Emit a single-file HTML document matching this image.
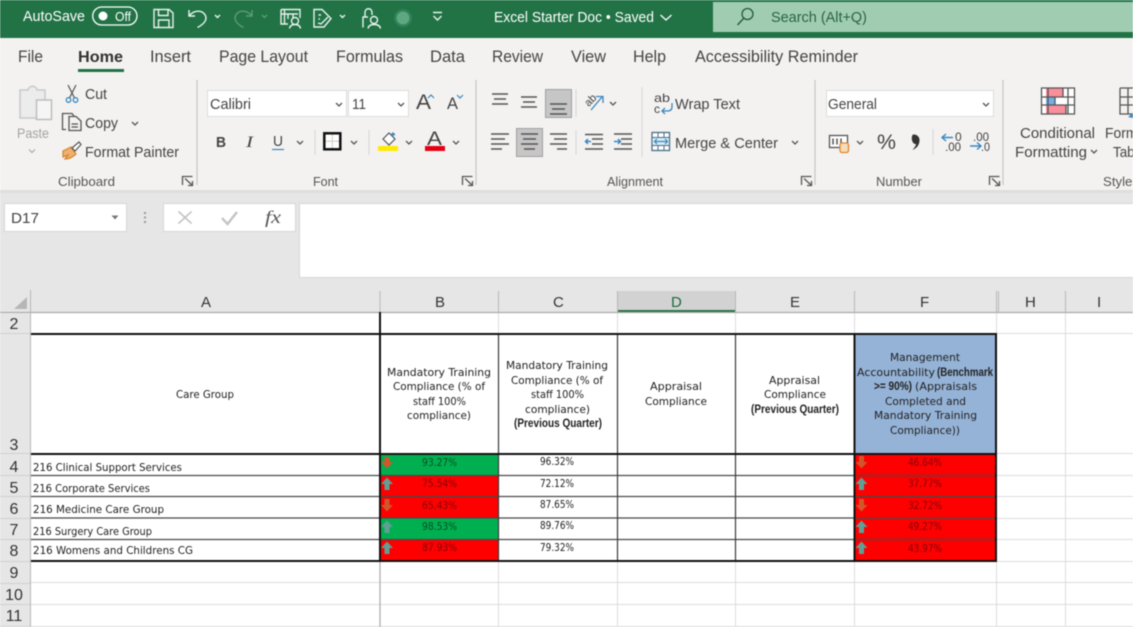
<!DOCTYPE html>
<html><head><meta charset="utf-8"><title>Excel Starter Doc</title>
<style>
html,body{margin:0;padding:0;width:1133px;height:627px;overflow:hidden;background:#fff}
svg{display:block;filter:blur(.4px)}
text{font-family:"Liberation Sans",sans-serif;fill:#444;font-size:15px}
.w{fill:#fff}
.t{font-size:17px;fill:#444}
.r{font-size:14.5px;fill:#444}
.l{font-size:12.5px;fill:#555}
.c{font-family:"DejaVu Sans",sans-serif;font-size:11px;fill:#222}
.b{font-family:"Liberation Sans",sans-serif;font-weight:bold;font-size:12px;fill:#222}
.h{font-size:15px;fill:#333}
.n{font-size:16px;fill:#333;text-anchor:middle}
.gv{font-family:"DejaVu Sans",sans-serif;font-size:11px;fill:#064d24}
.rv{font-family:"DejaVu Sans",sans-serif;font-size:11px;fill:#7d0508}
.i{fill:none;stroke:#555;stroke-width:1.3}
.s{fill:none;stroke:#e8f2ec;stroke-width:1.4}
.ch{fill:none;stroke:#555;stroke-width:1.3}
</style></head><body>
<svg width="1133" height="627" viewBox="0 0 1133 627" xmlns="http://www.w3.org/2000/svg">
<rect width="1133" height="627" fill="#fff"/>
<!-- title bar -->
<rect width="1133" height="38" fill="#217346"/>
<rect x="713" y="2" width="420" height="30" fill="#a0cdb2"/>
<text class="w" x="23" y="21" font-size="14" textLength="62" lengthAdjust="spacingAndGlyphs">AutoSave</text>
<rect x="92.700" y="7" width="44.300" height="18" rx="9" fill="none" stroke="#fff" stroke-width="1.3"/>
<circle cx="103" cy="16" r="4.500" fill="#fff"/>
<text class="w" x="115" y="21" style="font-size:13px" textLength="16" lengthAdjust="spacingAndGlyphs">Off</text>
<path class="s" d="M154 9.500H169L173 13V27.500H154ZM158.500 9.500V15.500H168V9.500M158.500 27.500V20H169V27.500"/>
<path class="s" d="M189 10V16H195M189.500 15.500C193 11 200 9.500 204 13.500C208 18 206 23 197.500 27.500"/>
<path class="s" d="M215 15l2.500 2.500 2.500-2.500"/>
<path d="M252 10V16H246M251.500 15.500C248 11 241 9.500 237 13.500C233 18 235 23 243.500 27.500" fill="none" stroke="#5d9a78" stroke-width="1.4"/>
<path d="M262 15l2.500 2.500 2.500-2.500" fill="none" stroke="#5d9a78" stroke-width="1.3"/>
<path class="s" d="M281 9.500H300V18M281 9.500V24H288M284.500 9.500V24M281 14H298M288 14V19M293 14.500V18"/>
<circle cx="295" cy="21" r="3.500" fill="none" stroke="#e8f2ec" stroke-width="1.400"/>
<path class="s" d="M289.500 28.500C290 25.500 292 24.500 295 24.500C298 24.500 300 25.500 300.500 28.500"/>
<path class="s" d="M314 9.500H322L331 18.500L324 27H314ZM318.500 15H321M318.500 19H320M318 23L321 24L328 17"/>
<path class="s" d="M340 15l2.500 2.500 2.500-2.500"/>
<path class="s" d="M363 27.500V17H368M365 17V12.500C365 7.500 372 7.500 372 12.500V15"/>
<circle cx="374" cy="20" r="3.500" fill="none" stroke="#e8f2ec" stroke-width="1.400"/>
<path class="s" d="M368 28.500C368.500 25.500 371 24.500 374 24.500C377 24.500 380 25.500 380.500 28.500"/>
<circle cx="403" cy="18" r="9" fill="#2f8358"/><circle cx="403" cy="18" r="6.500" fill="#5ea781"/>
<path class="s" d="M433 12.500H442M433.500 16l4 4 4-4"/>
<text class="w" x="494" y="22" textLength="160" lengthAdjust="spacingAndGlyphs" style="font-size:15px">Excel Starter Doc • Saved</text>
<path d="M660.500 15l5.500 5 5.500-5" fill="none" stroke="#fff" stroke-width="1.300"/>
<circle cx="747.500" cy="14" r="5.500" fill="none" stroke="#205c3c" stroke-width="1.300"/><path d="M743.500 18.500L737.500 25" stroke="#205c3c" stroke-width="1.400"/>
<text x="771" y="22" textLength="96" lengthAdjust="spacingAndGlyphs" style="font-size:15px;fill:#2a6345">Search (Alt+Q)</text>
<!-- ribbon -->
<rect y="38" width="1133" height="152" fill="#f3f2f1"/>
<text class="t" x="18" y="62" textLength="25" lengthAdjust="spacingAndGlyphs">File</text>
<text class="t" x="78" y="62" textLength="45" lengthAdjust="spacingAndGlyphs" style="font-weight:bold;fill:#333;font-size:16px">Home</text>
<rect x="78" y="69" width="46" height="3" fill="#217346"/>
<text class="t" x="150" y="62" textLength="41" lengthAdjust="spacingAndGlyphs">Insert</text>
<text class="t" x="219" y="62" textLength="89" lengthAdjust="spacingAndGlyphs">Page Layout</text>
<text class="t" x="336" y="62" textLength="67" lengthAdjust="spacingAndGlyphs">Formulas</text>
<text class="t" x="430" y="62" textLength="35" lengthAdjust="spacingAndGlyphs">Data</text>
<text class="t" x="492" y="62" textLength="51" lengthAdjust="spacingAndGlyphs">Review</text>
<text class="t" x="571" y="62" textLength="35" lengthAdjust="spacingAndGlyphs">View</text>
<text class="t" x="633" y="62" textLength="33" lengthAdjust="spacingAndGlyphs">Help</text>
<text class="t" x="695" y="62" textLength="163" lengthAdjust="spacingAndGlyphs">Accessibility Reminder</text>
<!-- separators -->
<g stroke="#c8c6c4" stroke-width="1.200"><path d="M197 80V185M476 80V185M815 80V185M1003 80V185"/>
<path d="M315 130V155M369 130V155M576 89V117M576 130V155M642 87V157M933 129V155" stroke="#dcdad8"/></g>
<!-- clipboard -->
<path d="M20 118V90H28C29 85 36 85 37 90H45V118Z" fill="#ececec" stroke="#c8c8c8" stroke-width="1.500"/>
<rect x="36.500" y="100" width="15" height="19.500" fill="#f5f5f5" stroke="#bdbdbd" stroke-width="1.500"/>
<text x="17" y="138" textLength="32" lengthAdjust="spacingAndGlyphs" style="fill:#a3a3a3;font-size:14px">Paste</text>
<path d="M29 149.500l3 3 3-3" fill="none" stroke="#aaa" stroke-width="1.200"/>
<path d="M68 85L74.500 98M76 85L69.500 98" fill="none" stroke="#555" stroke-width="1.200"/>
<circle cx="68.500" cy="100" r="2.300" fill="none" stroke="#3a87c0" stroke-width="1.300"/><circle cx="75.500" cy="100" r="2.300" fill="none" stroke="#3a87c0" stroke-width="1.300"/>
<text class="r" x="85" y="99" textLength="22" lengthAdjust="spacingAndGlyphs">Cut</text>
<path class="i" d="M66 129.500H62.500V113.500H72L74 116M69 116.500H76L81 121V130.500H69ZM71.500 124H78M71.500 127H78"/>
<text class="r" x="85" y="128" textLength="33" lengthAdjust="spacingAndGlyphs">Copy</text>
<path class="ch" d="M132 122l3 3 3-3"/>
<path d="M63 151L71 147L76 154C72 158 68 159 65 159L68 155L63 157Z" fill="#eeb16f" stroke="#d4822b" stroke-width="1.200"/>
<path d="M72 148L79 142L81 144.500L75 151Z" fill="#fff" stroke="#555" stroke-width="1.200"/>
<text class="r" x="85" y="157" textLength="94" lengthAdjust="spacingAndGlyphs">Format Painter</text>
<text class="l" x="58" y="186" textLength="57" lengthAdjust="spacingAndGlyphs">Clipboard</text>
<path class="i" d="M182.500 185V176.500H192.500M185 178.500L192 185M192.500 181V185.500H188" stroke-width="1"/>
<!-- font -->
<rect x="207.500" y="90.500" width="139" height="26" fill="#fff" stroke="#dcdcdc"/>
<rect x="348.500" y="90.500" width="60" height="26" fill="#fff" stroke="#dcdcdc"/>
<text class="r" x="210" y="109" textLength="41" lengthAdjust="spacingAndGlyphs">Calibri</text>
<path class="ch" d="M336 103l3 3 3-3M398 103l3 3 3-3" stroke="#444"/>
<text class="r" x="352" y="109" textLength="14" lengthAdjust="spacingAndGlyphs">11</text>
<text x="416" y="109" textLength="15" lengthAdjust="spacingAndGlyphs" style="font-size:21px">A</text>
<path d="M428 98l3-3 3 3" fill="none" stroke="#3a87c0" stroke-width="1.200"/>
<text x="447" y="109" textLength="11" lengthAdjust="spacingAndGlyphs" style="font-size:17px">A</text>
<path d="M457 95l3 3 3-3" fill="none" stroke="#3a87c0" stroke-width="1.200"/>
<text x="216" y="147" textLength="10" lengthAdjust="spacingAndGlyphs" style="font-weight:bold;font-size:15px">B</text>
<text x="246" y="147" textLength="7" lengthAdjust="spacingAndGlyphs" style="font-style:italic;font-family:'Liberation Serif',serif;font-size:16px">I</text>
<text x="273" y="146" textLength="10" lengthAdjust="spacingAndGlyphs" style="font-size:15px">U</text>
<path d="M272 149.500H284" stroke="#3a87c0" stroke-width="1.200"/>
<path class="ch" d="M297 141l3 3 3-3M351 141l3 3 3-3M406 141l3 3 3-3M453 141l3 3 3-3"/>
<rect x="324.300" y="133.300" width="16" height="16" fill="#fff" stroke="#111" stroke-width="2.500"/>
<path d="M332.300 135V148M326 141.300H339" stroke="#999" stroke-dasharray="1 1"/>
<path d="M383 139L389 133L395 139L389 145Z" fill="#fff" stroke="#555" stroke-width="1.200"/>
<path d="M393 137V133M391 135l2-2 2 2" fill="none" stroke="#3a87c0" stroke-width="1.300"/>
<rect x="378" y="146" width="20" height="5" fill="#ffea00"/>
<text x="427" y="145" textLength="15" lengthAdjust="spacingAndGlyphs" style="font-size:19px">A</text>
<rect x="425" y="146" width="20" height="5" fill="#e60012"/>
<text class="l" x="313" y="186" textLength="25" lengthAdjust="spacingAndGlyphs">Font</text>
<path class="i" d="M462.500 185V176.500H472.500M465 178.500L472 185M472.500 181V185.500H468" stroke-width="1"/>
<!-- alignment -->
<rect x="545.500" y="89.500" width="26" height="28" fill="#c6c6c6" stroke="#a0a0a0"/>
<rect x="516.500" y="128.500" width="26" height="28" fill="#c6c6c6" stroke="#a0a0a0"/>
<g stroke="#555" stroke-width="1.400" fill="none">
<path d="M492 94H508M494 99H506M492 104H508"/>
<path d="M521 97H537M523 102H535M521 107H537"/>
<path d="M550 104H567M552 109H565M550 114H567"/>
<path d="M491 134H509M491 139H505M491 144H509M491 149H502"/>
<path d="M521 134H538M523 139H536M521 144H538M524 149H535"/>
<path d="M550 134H567M554 139H567M550 144H567M557 149H567"/>
<path d="M592 139H603M592 144H603M585 134.500H603M585 149H603"/>
<path d="M621 139H632M621 144H632M614 134H632M614 149H632"/>
</g>
<path d="M585.500 141.500H591M588 139l-2.500 2.500 2.500 2.500" fill="none" stroke="#3a87c0" stroke-width="1.500"/>
<path d="M614 141.500H620M618 139l2.500 2.500-2.500 2.500" fill="none" stroke="#3a87c0" stroke-width="1.500"/>
<path d="M591 110L602 97M596 96.500H603V103" fill="none" stroke="#3a87c0" stroke-width="1.300"/>
<text x="584" y="104" transform="rotate(-45 590 100)" style="font-size:11px">ab</text>
<path class="ch" d="M610 102l3 3 3-3"/>
<text x="654" y="102" textLength="16" lengthAdjust="spacingAndGlyphs" style="font-size:12px">ab</text>
<text x="654" y="113" style="font-size:12px">c</text>
<path d="M672 103V107C672 110 670 111 667 111H662M665 108l-3 3 3 3" fill="none" stroke="#3a87c0" stroke-width="1.300"/>
<text class="r" x="675" y="109" textLength="65" lengthAdjust="spacingAndGlyphs">Wrap Text</text>
<rect x="652" y="132.500" width="17.500" height="18" fill="#fff" stroke="#4a6e85" stroke-width="1.300"/>
<rect x="652.700" y="138" width="16" height="7" fill="#d8ecf7"/>
<path d="M654.500 141.500H667.500M657 139l-2.500 2.500 2.500 2.500M665 139l2.500 2.500-2.500 2.500" fill="none" stroke="#3a87c0" stroke-width="1.200"/>
<path d="M652 137.500H670M652 145.500H670M658 132V137M664 132V137M658 146V151M664 146V151" stroke="#4a6e85"/>
<text class="r" x="675" y="148" textLength="103" lengthAdjust="spacingAndGlyphs">Merge &amp; Center</text>
<path class="ch" d="M792 141l3 3 3-3"/>
<text class="l" x="607" y="186" textLength="56" lengthAdjust="spacingAndGlyphs">Alignment</text>
<path class="i" d="M801.500 185V176.500H811.500M804 178.500L811 185M811.500 181V185.500H807" stroke-width="1"/>
<!-- number -->
<rect x="826.500" y="90.500" width="167" height="26" fill="#fff" stroke="#dcdcdc"/>
<text class="r" x="828" y="109" textLength="49" lengthAdjust="spacingAndGlyphs">General</text>
<path class="ch" d="M983 103l3 3 3-3" stroke="#444"/>
<rect x="829.500" y="135.500" width="18" height="12" fill="#fff" stroke="#555" stroke-width="1.300"/>
<path d="M833 138.500V144.500M837 138.500V144.500M841 138.500V144.500" stroke="#555" stroke-width="1.500"/>
<rect x="840" y="143" width="8.500" height="9.500" rx="2" fill="#f7dcb8" stroke="#e0862c" stroke-width="1.300"/>
<path class="ch" d="M857 141l3 3 3-3"/>
<text x="877" y="149" textLength="19" lengthAdjust="spacingAndGlyphs" style="font-size:21px">%</text>
<path d="M913 134.500C917 134 920 137 919.500 141C919 146 916 148.500 912.500 150C914.500 147.500 916 145.500 916 144C912 144.500 910.500 137 913 134.500Z" fill="#333"/>
<path d="M942 137.500H953M946 134l-4 3.500 4 3.500" fill="none" stroke="#3a87c0" stroke-width="1.400"/>
<text x="955" y="141" style="font-size:12px">0</text><text x="945" y="151" style="font-size:12px" textLength="16" lengthAdjust="spacingAndGlyphs">.00</text>
<text x="973" y="141" style="font-size:12px" textLength="16" lengthAdjust="spacingAndGlyphs">.00</text>
<path d="M970 146H981M977 142.500l4 3.500-4 3.500" fill="none" stroke="#3a87c0" stroke-width="1.400"/>
<text x="981" y="151" style="font-size:12px" textLength="9" lengthAdjust="spacingAndGlyphs">.0</text>
<text class="l" x="876" y="186" textLength="46" lengthAdjust="spacingAndGlyphs">Number</text>
<path class="i" d="M989.500 185V176.500H999.500M992 178.500L999 185M999.500 181V185.500H995" stroke-width="1"/>
<!-- styles -->
<rect x="1041.500" y="88" width="33" height="26" fill="#fff"/>
<rect x="1046" y="88" width="17" height="9" fill="#f88f9b"/>
<rect x="1046" y="97" width="9" height="8" fill="#73b0e5"/>
<rect x="1046" y="105" width="20" height="9" fill="#f88f9b"/>
<path d="M1041.500 88H1074.500V114H1041.500ZM1041.500 97H1074.500M1041.500 105H1074.500M1048 88V114M1055 97V105M1063 88V97M1066 105V114M1068 88V114" fill="none" stroke="#555" stroke-width="1.300"/>
<text class="r" x="1020" y="138" textLength="75" lengthAdjust="spacingAndGlyphs">Conditional</text>
<text class="r" x="1015" y="157" textLength="72" lengthAdjust="spacingAndGlyphs">Formatting</text>
<path class="ch" d="M1091 150l3 3 3-3"/>
<path d="M1120 88H1133M1120 88V114H1133M1120 97H1133M1120 105H1133M1128 88V114" fill="none" stroke="#555" stroke-width="1.300"/>
<path d="M1128 117L1133 113V118Z" fill="#3a87c0"/>
<text class="r" x="1105" y="138" textLength="44" lengthAdjust="spacingAndGlyphs">Format</text>
<text class="r" x="1113" y="157" textLength="32" lengthAdjust="spacingAndGlyphs">Table</text>
<text class="l" x="1103" y="186" textLength="36" lengthAdjust="spacingAndGlyphs">Styles</text>
<!-- formula bar -->
<rect y="190" width="1133" height="122" fill="#e6e6e6"/>
<rect y="190" width="1133" height="3" fill="#dedede"/>
<rect x="4.500" y="203.500" width="122" height="28" fill="#fff" stroke="#d6d6d6"/>
<text x="11" y="223" textLength="28" lengthAdjust="spacingAndGlyphs" style="font-size:15px">D17</text>
<path d="M111.500 215.500H118.500L115 219.500Z" fill="#777"/>
<path d="M145 212V214M145 216.500V218.500M145 221V223" stroke="#999" stroke-width="2"/>
<rect x="163.500" y="203.500" width="132" height="28" fill="#fff" stroke="#d6d6d6"/>
<path d="M178.500 211.500L191.500 223.500M191.500 211.500L178.500 223.500" stroke="#c4c4c4" stroke-width="1.600"/>
<path d="M222 218L227.500 224L237 212" fill="none" stroke="#c4c4c4" stroke-width="2.400"/>
<text x="265" y="223" textLength="16" lengthAdjust="spacingAndGlyphs" style="font-family:'Liberation Serif',serif;font-style:italic;font-size:18px;fill:#555">fx</text>
<rect x="299.500" y="203.500" width="834" height="74" fill="#fff" stroke="#d6d6d6"/>
<!-- column headers -->
<rect x="617" y="291" width="118" height="21" fill="#d2d2d2"/>
<rect x="617" y="310" width="118" height="2" fill="#217346"/>
<path d="M27 297V309H14Z" fill="#b6b6b6"/>
<path d="M0 312.500H1133" stroke="#ababab" stroke-width="1.300"/>
<g stroke="#b8b8b8"><path d="M30.500 290V627M380 291V312M498.500 291V312M617.500 291V312M735.500 291V312M854.500 291V312M996.500 291V312M998.500 291V312M1065.500 291V312"/></g>
<text class="h" x="201" y="307">A</text><text class="h" x="435" y="307">B</text><text class="h" x="553" y="307">C</text>
<text class="h" x="671" y="307" style="fill:#1d6b41">D</text><text class="h" x="790" y="307">E</text><text class="h" x="920" y="307">F</text>
<text class="h" x="1025" y="307">H</text><text class="h" x="1097" y="307">I</text>
<!-- row headers -->
<rect y="313" width="30" height="314" fill="#e6e6e6"/>
<g stroke="#cfcfcf"><path d="M0 333.500H30M0 453.500H30M0 475.500H30M0 496.500H30M0 518.500H30M0 539.500H30M0 561.500H30M0 583.500H30M0 604.500H30M0 626.500H30"/></g>
<text class="n" x="14" y="329">2</text><text class="n" x="14" y="450">3</text><text class="n" x="14" y="472">4</text><text class="n" x="14" y="493">5</text><text class="n" x="14" y="514">6</text><text class="n" x="14" y="535">7</text><text class="n" x="14" y="556">8</text><text class="n" x="14" y="578">9</text><text class="n" x="14" y="600">10</text><text class="n" x="14" y="621">11</text>
<!-- fills -->
<rect x="381" y="454" width="117" height="21" fill="#00b050"/>
<rect x="381" y="475" width="117" height="43" fill="#fe0000"/>
<rect x="381" y="518" width="117" height="21" fill="#00b050"/>
<rect x="381" y="539" width="117" height="22" fill="#fe0000"/>
<rect x="855" y="334" width="141" height="119" fill="#95b3d7"/>
<rect x="855" y="454" width="141" height="107" fill="#fe0000"/>
<!-- gridlines -->
<g stroke="#dcdcdc"><path d="M31 333.500H1133M31 582.500H1133M31 604.500H1133M31 626.500H1133M997 453.500H1133M997 475.500H1133M997 496.500H1133M997 518.500H1133M997 539.500H1133M997 561.500H1133"/>
<path d="M498.500 313V333M617.500 313V333M735.500 313V333M854.500 313V333M996.500 313V333M1065.500 313V627M498.500 562V627M617.500 562V627M735.500 562V627M854.500 562V627M996.500 562V627"/></g>
<path d="M380 562V627" stroke="#a8a8a8" stroke-width="1.200"/>
<!-- table borders -->
<g stroke="#4a4a4a" stroke-width="1.200"><path d="M31 475.500H996M31 496.500H996M31 518H996M31 539.500H996"/></g>
<g stroke="#3a3a3a" stroke-width="1.200"><path d="M498.500 334V561M617.500 334V561M735.500 334V561"/></g>
<g stroke="#111" stroke-width="2"><path d="M31 334H997M31 454H997M31 561H997M380 312V562"/>
<path d="M854.500 334V561M996 333V562"/></g>
<!-- arrows -->
<g fill="#d2562c"><path d="M384.500 457H389.500V462H393L387 468.500L381 462H384.500Z"/><path d="M384.500 499H389.500V505H393L387 511.500L381 505H384.500Z"/><path d="M859 456H864V462H867.500L861.500 468.500L855.500 462H859Z"/><path d="M859 499H864V505H867.500L861.500 511.500L855.500 505H859Z"/></g>
<g fill="#5f9f95"><path d="M384.500 490H389.500V484H393L387 477.500L381 484H384.500Z"/><path d="M384.500 533H389.500V527H393L387 520.500L381 527H384.500Z"/><path d="M384.500 554H389.500V548H393L387 541.500L381 548H384.500Z"/><path d="M859 490H864V484H867.500L861.500 477.500L855.500 484H859Z"/><path d="M859 533H864V527H867.500L861.500 520.500L855.500 527H859Z"/><path d="M859 554H864V548H867.500L861.500 541.500L855.500 548H859Z"/></g>
<!-- cells text -->
<text class="c" x="176" y="398" textLength="58" lengthAdjust="spacingAndGlyphs">Care Group</text>
<text class="c" x="33" y="471" textLength="149" lengthAdjust="spacingAndGlyphs">216 Clinical Support Services</text>
<text class="c" x="33" y="492" textLength="117" lengthAdjust="spacingAndGlyphs">216 Corporate Services</text>
<text class="c" x="33" y="513" textLength="131" lengthAdjust="spacingAndGlyphs">216 Medicine Care Group</text>
<text class="c" x="33" y="535" textLength="119" lengthAdjust="spacingAndGlyphs">216 Surgery Care Group</text>
<text class="c" x="33" y="554" textLength="160" lengthAdjust="spacingAndGlyphs">216 Womens and Childrens CG</text>
<text class="c" x="387" y="376" textLength="104" lengthAdjust="spacingAndGlyphs">Mandatory Training</text>
<text class="c" x="393" y="390" textLength="92" lengthAdjust="spacingAndGlyphs">Compliance (% of</text>
<text class="c" x="413" y="405" textLength="53" lengthAdjust="spacingAndGlyphs">staff 100%</text>
<text class="c" x="407" y="419" textLength="64" lengthAdjust="spacingAndGlyphs">compliance)</text>
<text class="c" x="506" y="369" textLength="102" lengthAdjust="spacingAndGlyphs">Mandatory Training</text>
<text class="c" x="511" y="384" textLength="92" lengthAdjust="spacingAndGlyphs">Compliance (% of</text>
<text class="c" x="531" y="398" textLength="53" lengthAdjust="spacingAndGlyphs">staff 100%</text>
<text class="c" x="525" y="413" textLength="65" lengthAdjust="spacingAndGlyphs">compliance)</text>
<text class="b" x="514" y="427" textLength="88" lengthAdjust="spacingAndGlyphs">(Previous Quarter)</text>
<text class="c" x="650" y="390" textLength="52" lengthAdjust="spacingAndGlyphs">Appraisal</text>
<text class="c" x="645" y="405" textLength="62" lengthAdjust="spacingAndGlyphs">Compliance</text>
<text class="c" x="769" y="384" textLength="51" lengthAdjust="spacingAndGlyphs">Appraisal</text>
<text class="c" x="764" y="398" textLength="62" lengthAdjust="spacingAndGlyphs">Compliance</text>
<text class="b" x="751" y="413" textLength="88" lengthAdjust="spacingAndGlyphs">(Previous Quarter)</text>
<text class="c" x="890" y="361" textLength="70" lengthAdjust="spacingAndGlyphs">Management</text>
<text class="c" x="857" y="376" textLength="78" lengthAdjust="spacingAndGlyphs">Accountability</text>
<text class="b" x="937" y="376" textLength="56" lengthAdjust="spacingAndGlyphs">(Benchmark</text>
<text class="b" x="874" y="390" textLength="38" lengthAdjust="spacingAndGlyphs">&gt;= 90%)</text>
<text class="c" x="915" y="390" textLength="62" lengthAdjust="spacingAndGlyphs">(Appraisals</text>
<text class="c" x="885" y="405" textLength="81" lengthAdjust="spacingAndGlyphs">Completed and</text>
<text class="c" x="874" y="419" textLength="103" lengthAdjust="spacingAndGlyphs">Mandatory Training</text>
<text class="c" x="890" y="434" textLength="70" lengthAdjust="spacingAndGlyphs">Compliance))</text>
<text class="gv" x="422" y="466" textLength="35" lengthAdjust="spacingAndGlyphs">93.27%</text>
<text class="rv" x="422" y="487" textLength="35" lengthAdjust="spacingAndGlyphs">75.54%</text>
<text class="rv" x="422" y="509" textLength="35" lengthAdjust="spacingAndGlyphs">65.43%</text>
<text class="gv" x="422" y="530" textLength="35" lengthAdjust="spacingAndGlyphs">98.53%</text>
<text class="rv" x="422" y="551" textLength="35" lengthAdjust="spacingAndGlyphs">87.93%</text>
<text class="c" x="540" y="465" textLength="34" lengthAdjust="spacingAndGlyphs">96.32%</text>
<text class="c" x="540" y="487" textLength="34" lengthAdjust="spacingAndGlyphs">72.12%</text>
<text class="c" x="540" y="508" textLength="34" lengthAdjust="spacingAndGlyphs">87.65%</text>
<text class="c" x="540" y="529" textLength="34" lengthAdjust="spacingAndGlyphs">89.76%</text>
<text class="c" x="540" y="551" textLength="34" lengthAdjust="spacingAndGlyphs">79.32%</text>
<text class="rv" x="908" y="466" textLength="34" lengthAdjust="spacingAndGlyphs">46.64%</text>
<text class="rv" x="908" y="487" textLength="34" lengthAdjust="spacingAndGlyphs">37.77%</text>
<text class="rv" x="908" y="509" textLength="34" lengthAdjust="spacingAndGlyphs">32.72%</text>
<text class="rv" x="908" y="530" textLength="34" lengthAdjust="spacingAndGlyphs">49.27%</text>
<text class="rv" x="908" y="552" textLength="34" lengthAdjust="spacingAndGlyphs">43.97%</text>
</svg>
</body></html>
